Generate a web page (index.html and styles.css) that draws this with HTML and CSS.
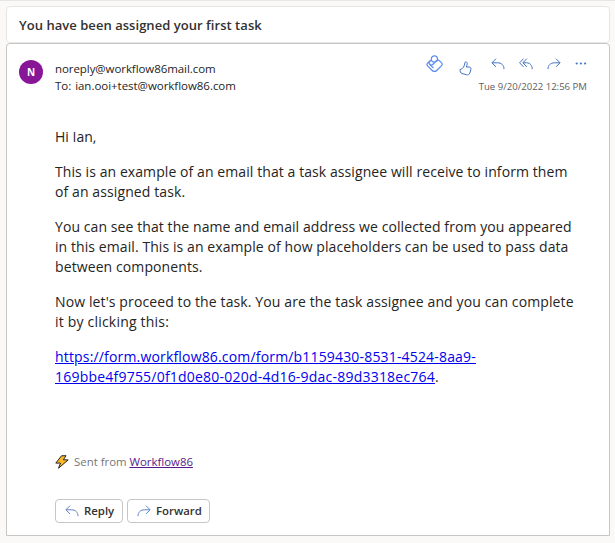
FILE: index.html
```
<!DOCTYPE html>
<html lang="en">
<head>
<meta charset="utf-8">
<title>You have been assigned your first task</title>
<link rel="stylesheet" href="styles.css">
</head>
<body>
<svg class="defs" aria-hidden="true">
  <symbol id="reply" viewBox="0 0 14 12"><path d="M5 .7.9 4.800 5 8.900M1 4.800h5.500c4 0 6.500 2.500 6.500 6.300"/></symbol>
  <symbol id="forward" viewBox="0 0 14 12"><path d="m9 .7 4.100 4.100L9 8.900M13 4.800H7.500C3.500 4.800 1 7.300 1 11.100"/></symbol>
</svg>
<header class="subject"><h1>You have been assigned your first task</h1></header>
<main class="message">
  <div class="head">
    <div class="avatar">N</div>
    <div class="people">
      <div class="from">noreply@workflow86mail.com</div>
      <div class="to">To: <span>ian.ooi+test@workflow86.com</span></div>
    </div>
    <div class="meta">
      <div class="actions">
        <svg class="viva" viewBox="0 0 17 17"><circle cx="8.400" cy="3.900" r="3.100"/><path d="M4.300 5.500 1.600 8.100a2 2 0 0 0 0 2.800l4.600 4.600a3.100 3.100 0 0 0 4.500 0l4.700-4.700a2.300 2.300 0 0 0 0-3.200l-1.800-1.800a2.300 2.300 0 0 0-3.200 0L6.700 9.500a2 2 0 0 1-2.900 0 2 2 0 0 1 0-2.800l2-2M3.900 9.500l3.600 3.700"/></svg>
        <svg class="thumb" viewBox="0 0 13 15"><path d="M1 8.500c1.800-.2 3.200-1.500 4.100-3.600.5-1.100.6-2.500.9-3.600.7-1.100 2.200-.3 2.200 1.200 0 1.400-.5 2.500-.9 3.500H10c1.400 0 2.200 1 1.900 2.300l-1 3.700c-.5 1.600-1.900 2.100-3.500 1.700l-4.500-1.200C1.600 12.100.9 10.300 1 8.500Z"/></svg>
        <svg class="arrow"><use href="#reply"/></svg>
        <svg class="arrow" viewBox="0 0 14 12"><path d="M4.500.7.6 4.800l3.900 4.100M7.800.7 3.900 4.800l3.900 4.100M4 4.800h3.500c3.500 0 5.700 2.500 5.700 6.300"/></svg>
        <svg class="arrow"><use href="#forward"/></svg>
        <svg class="more" viewBox="0 0 12 3"><circle cx="1.700" cy="1.500" r="1.100"/><circle cx="5.900" cy="1.500" r="1.100"/><circle cx="10.100" cy="1.500" r="1.100"/></svg>
      </div>
      <time>Tue 9/20/2022 12:56 PM</time>
    </div>
  </div>
  <article>
    <p>Hi Ian,</p>
    <p><span class="l1">This is an example of an email that a task assignee will receive to inform them</span><br><span class="l2">of an assigned task.</span></p>
    <p><span class="l3">You can see that the name and email address we collected from you appeared</span><br><span class="l4">in this email. This is an example of how placeholders can be used to pass data</span><br><span class="l5">between components.</span></p>
    <p><span class="l6">Now let's proceed to the task. You are the task assignee and you can complete</span><br><span class="l7">it by clicking this:</span></p>
    <p><a href="#"><span class="l8">https://form.workflow86.com/form/b1159430-8531-4524-8aa9-</span><br><span class="l9">169bbe4f9755/0f1d0e80-020d-4d16-9dac-89d3318ec764</span></a>.</p>
  </article>
  <div class="sent">
    <svg viewBox="0 0 14 14"><path d="M6.500.8 11 .7 8.400 4.800l4.800.1L3.500 13.200l2-5.100H.8Z"/></svg>
    <span>Sent from <a href="#">Workflow86</a></span>
  </div>
  <div class="buttons">
    <button class="reply"><svg class="arrow"><use href="#reply"/></svg>Reply</button>
    <button class="fwd"><svg class="arrow"><use href="#forward"/></svg>Forward</button>
  </div>
</main>
</body>
</html>
```
FILE: styles.css
```
* { box-sizing: border-box; }
body {
  margin: 0;
  height: 543px;
  padding: 5px 5px 0 6px;
  border-top: 1px solid #e8e6e4;
  background: #faf9f8;
  color: #252423;
  font-family: "Open Sans", sans-serif;
  overflow: hidden;
}
.defs { position: absolute; width: 0; height: 0; }
svg { fill: none; stroke: #4472c4; stroke-width: 1; flex: none; }
.subject {
  height: 37px;
  padding-left: 12px;
  display: flex;
  align-items: center;
  background: #fff;
  border: 1px solid #e8e6e4;
  border-radius: 4px;
}
h1 { margin: 0; font-size: 13px; font-weight: 600; line-height: 20px; letter-spacing: .04px; color: #323130; white-space: nowrap; }
.message {
  height: 493px;
  padding: 16px 22px 0 12px;
  background: #fff;
  border: 1px solid #c8c6c4;
  border-radius: 4px 4px 0 0;
}
.head { display: flex; height: 67px; }
.avatar {
  width: 24px;
  height: 24px;
  border-radius: 50%;
  background: #881798;
  color: #fff;
  font-size: 10px;
  font-weight: 700;
  line-height: 24px;
  text-align: center;
}
.people { margin: 0 0 0 12px; font-size: 11.5px; line-height: 17px; white-space: nowrap; }
.from { letter-spacing: -.07px; }
.to { letter-spacing: -.03px; }
.to span { margin-left: 1px; }
.meta { margin-left: auto; }
.actions { display: flex; align-items: flex-start; justify-content: flex-end; height: 17px; margin-top: -5px; }
.viva { width: 17px; height: 17px; margin: 0 16px 0 0; stroke: #5b8def; stroke-width: 1.2; }
.thumb { width: 13px; height: 15px; margin: 6px 19px 0 0; }
.arrow { width: 14px; height: 12px; }
.actions .arrow { margin: 3px 14px 0 0; }
.more { width: 12px; height: 3px; margin-top: 7px; fill: #4472c4; stroke: none; }
time { display: block; margin-top: 8px; text-align: right; font-size: 9.6px; line-height: 14px; color: #605e5c; white-space: nowrap; }
article { margin-left: 36px; font-size: 14px; line-height: 20px; white-space: nowrap; }
p { margin: 0 0 15px; }
.l1, .l3, .l4 { letter-spacing: .083px; }
.l2, .l5 { letter-spacing: .1px; }
.l6 { letter-spacing: .115px; }
.l7 { letter-spacing: .2px; }
.l8 { letter-spacing: .17px; }
.l9 { letter-spacing: .215px; }
article a { color: #0000ee; }
.sent { display: flex; align-items: center; height: 20px; margin: 65px 0 0 36px; font-size: 11.4px; line-height: 20px; color: #767676; }
.sent svg { width: 14px; height: 14px; margin-right: 5px; fill: #fbb829; stroke: #292421; }
.sent a { color: #551a8b; }
.buttons { display: flex; gap: 4px; margin: 27px 0 0 36px; }
button {
  display: flex;
  align-items: center;
  height: 24px;
  padding: 0 0 0 9px;
  border: 1px solid #c8c6c4;
  border-radius: 4px;
  background: #fff;
  color: #323130;
  font: 600 11.4px/22px "Open Sans", sans-serif;
}
button svg { margin-right: 5px; stroke: #6380c0; }
.reply { width: 68px; }
.fwd { width: 83px; }
```
